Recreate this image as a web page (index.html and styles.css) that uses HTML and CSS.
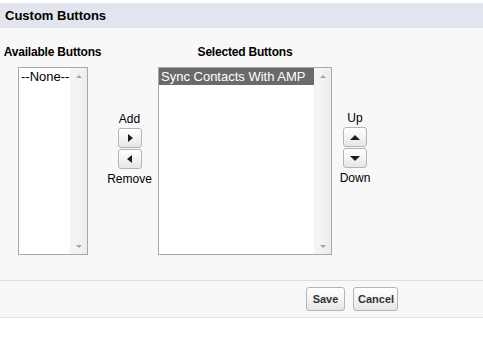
FILE: index.html
```html
<!DOCTYPE html>
<html lang="en">
<head>
    <meta charset="UTF-8">
    <title>Custom Buttons</title>
    <link rel="stylesheet" href="styles.css">
</head>
<body>
    <div class="page">
        <!-- Section header -->
        <div class="section-head">Custom Buttons</div>

        <!-- Duelling picklists -->
        <div class="section-body">
            <div class="picker">
                <div class="col-label">Available Buttons</div>
                <div></div>
                <div class="col-label">Selected Buttons</div>
                <div></div>

                <div class="listbox listbox-avail">
                    <div class="options">
                        <div class="option">--None--</div>
                    </div>
                    <div class="scrollbar"><span class="sb-up"></span><span class="sb-down"></span></div>
                </div>

                <div class="mover mover-add">
                    <span class="mover-text">Add</span>
                    <button class="arrow-btn"><span class="tri tri-right"></span></button>
                    <button class="arrow-btn"><span class="tri tri-left"></span></button>
                    <span class="mover-text">Remove</span>
                </div>

                <div class="listbox listbox-selected">
                    <div class="options">
                        <div class="option selected">Sync Contacts With AMP</div>
                    </div>
                    <div class="scrollbar"><span class="sb-up"></span><span class="sb-down"></span></div>
                </div>

                <div class="mover mover-order">
                    <span class="mover-text">Up</span>
                    <button class="arrow-btn"><span class="tri tri-up"></span></button>
                    <button class="arrow-btn"><span class="tri tri-down"></span></button>
                    <span class="mover-text">Down</span>
                </div>
            </div>
        </div>

        <!-- Footer buttons -->
        <div class="footer">
            <button class="btn">Save</button>
            <button class="btn">Cancel</button>
        </div>
    </div>
</body>
</html>
```

FILE: styles.css
```css
/* Basic Reset */
body {
    margin: 0;
    background: #fff;
    font-family: "Liberation Sans", Arial, sans-serif;
    color: #000;
}

.page {
    padding-top: 3px;
}

/* Header */
.section-head {
    background: #e3e5ee;
    height: 25px;
    line-height: 25px;
    padding-left: 5px;
    font-size: 13px;
    font-weight: bold;
}

/* Body */
.section-body {
    background: #f8f8f8;
    padding: 17px 0 25px 4px;
}

.picker {
    display: grid;
    grid-template-columns: 97px 57px 174px 46px;
    row-gap: 8px;
}

.col-label {
    justify-self: center;
    font-size: 12px;
    font-weight: bold;
    line-height: 14px;
    white-space: nowrap;
    letter-spacing: -0.2px;
}

/* List boxes */
.listbox {
    display: flex;
    height: 186px;
    border: 1px solid #a8a8a8;
    background: #fff;
}

.listbox-avail {
    width: 68px;
    margin-left: 14px;
}

.options {
    flex: 1;
    font-size: 13px;
    line-height: 17px;
}

.option {
    padding-left: 2px;
    white-space: nowrap;
    overflow: hidden;
}

.option.selected {
    background: #6a6a6a;
    color: #fff;
}

.scrollbar {
    width: 17px;
    background: linear-gradient(to right, #f4f4f4 0, #f4f4f4 40%, #ececec 100%);
    display: flex;
    flex-direction: column;
    justify-content: space-between;
    align-items: center;
    padding: 7px 0 6px;
    box-sizing: border-box;
}

.sb-up,
.sb-down {
    width: 0;
    height: 0;
    border-left: 3px solid transparent;
    border-right: 3px solid transparent;
}

.sb-up {
    border-bottom: 3px solid #a3a3a3;
}

.sb-down {
    border-top: 3px solid #a3a3a3;
}

/* Add / Remove and Up / Down */
.mover {
    display: flex;
    flex-direction: column;
    align-items: center;
    font-size: 12px;
    line-height: 14px;
}

.mover-add {
    padding-top: 45px;
}

.mover-order {
    padding-top: 44px;
}

.mover-text {
    margin-bottom: 2px;
}

.arrow-btn + .mover-text {
    margin-top: 3px;
    margin-bottom: 0;
}

.arrow-btn {
    width: 24px;
    height: 20px;
    margin: 0 0 1px;
    padding: 0;
    border: 1px solid #b5b5b5;
    border-radius: 3px;
    background: linear-gradient(to bottom, #fff 0, #f4f4f4 50%, #e6e6e6 100%);
    display: flex;
    align-items: center;
    justify-content: center;
}

.arrow-btn + .arrow-btn {
    margin-bottom: 0;
}

.tri {
    width: 0;
    height: 0;
}

.tri-right {
    border-top: 4px solid transparent;
    border-bottom: 4px solid transparent;
    border-left: 5px solid #1e1e1e;
    margin-left: 1px;
}

.tri-left {
    border-top: 4px solid transparent;
    border-bottom: 4px solid transparent;
    border-right: 5px solid #1e1e1e;
}

.tri-up {
    border-left: 5px solid transparent;
    border-right: 5px solid transparent;
    border-bottom: 5px solid #1e1e1e;
}

.tri-down {
    border-left: 5px solid transparent;
    border-right: 5px solid transparent;
    border-top: 5px solid #1e1e1e;
}

/* Footer */
.footer {
    background: #f8f8f8;
    border-top: 1px solid #dcdcdc;
    border-bottom: 1px solid #e6e6e6;
    padding: 6px 0 6px 306px;
    display: flex;
    gap: 8px;
}

.btn {
    height: 24px;
    padding: 0 4px;
    border: 1px solid #b5b5b5;
    border-radius: 3px;
    background: linear-gradient(to bottom, #fff 0, #f4f4f4 50%, #e6e6e6 100%);
    font-family: "Liberation Sans", Arial, sans-serif;
    font-size: 11px;
    font-weight: bold;
    color: #333;
}

.btn:first-child {
    width: 39px;
}

.btn:last-child {
    width: 45px;
}
```
